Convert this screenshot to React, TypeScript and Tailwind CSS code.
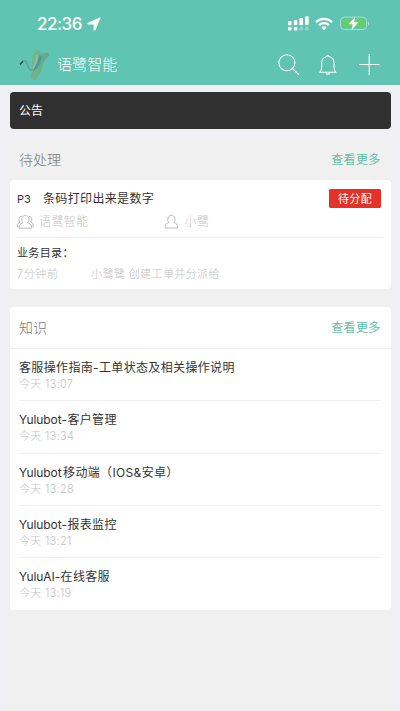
import type { ReactNode } from "react";

type Article = {
  name?: string;
  title: string;
  time: string;
};

const articles: Article[] = [
  { title: "客服操作指南-工单状态及相关操作说明", time: "今天 13:07" },
  { name: "Yulubot", title: "-客户管理", time: "今天 13:34" },
  { name: "Yulubot", title: "移动端（IOS&安卓）", time: "今天 13:28" },
  { name: "Yulubot", title: "-报表监控", time: "今天 13:21" },
  { name: "YuluAI", title: "-在线客服", time: "今天 13:19" },
];

function StatusBar() {
  return (
    <div className="flex h-[47px] items-center justify-between pl-[37px] pr-[30px]">
      <div className="flex items-center gap-[5px]">
        <span className="text-[17px] leading-5 font-medium tracking-[-0.5px]">
          22:36
        </span>
        <svg width="14" height="14" viewBox="0 0 14 14" fill="currentColor">
          <path d="M13.6 1 8.5 12.9c-.4.9-1.9.8-1.9-.4V7.6H1.5C.1 7.6-.1 6.3 1 5.8L12.7.4c.6-.3 1.1 0 .9.6Z" />
        </svg>
      </div>
      <div className="flex items-center">
        <svg width="21" height="15" viewBox="0 0 21 15" fill="currentColor">
          <rect x="0" y="5" width="3.6" height="4.2" rx="1" />
          <rect x="5.8" y="4" width="3.6" height="5.2" rx="1" />
          <rect x="11.4" y="2" width="3.6" height="7.2" rx="1" />
          <rect x="17.1" y=".3" width="3.6" height="8.9" rx="1" />
          <rect x="0" y="11" width="3.6" height="3.5" rx="1" />
          <rect x="5.8" y="11" width="3.6" height="3.5" rx="1" />
          <rect x="11.4" y="11" width="3.6" height="3.5" rx="1" opacity=".3" />
          <rect x="17.1" y="11" width="3.6" height="3.5" rx="1" opacity=".3" />
        </svg>
        <svg
          className="ml-1.5"
          width="18"
          height="14"
          viewBox="0 0 18 14"
          fill="none"
          stroke="currentColor"
          strokeWidth="2.3"
        >
          <path d="M1 5.1a11.3 11.3 0 0 1 16 0M3.9 8.3a7.3 7.3 0 0 1 10.2 0" />
          <path
            d="M6.3 10.6a3.8 3.8 0 0 1 5.4 0L9 13.3Z"
            fill="currentColor"
            stroke="none"
          />
        </svg>
        <svg className="ml-[7px]" width="30" height="15" viewBox="0 0 30 15">
          <rect
            x=".6"
            y="1.1"
            width="26"
            height="12.4"
            rx="3.8"
            fill="none"
            stroke="#a5e0d4"
          />
          <rect x="2.2" y="2.7" width="22.8" height="9.2" rx="2.4" fill="#65cd6a" />
          <path d="M28 5.3c1.6.5 1.6 3.5 0 4Z" fill="#a5e0d4" />
          <path
            d="m15.3.8-6.8 7.5h4.2l-1.1 5.6 6.8-7.6h-4.2Z"
            fill="#fff"
          />
        </svg>
      </div>
    </div>
  );
}

function Logo() {
  return (
    <svg width="32" height="34" viewBox="0 0 32 34" fill="none">
      <path d="M1 16.5 4.2 13" stroke="#234244" strokeWidth="1.2" />
      <path
        d="M4.5 13c2.4-.6 3.2 1 3.8 3.4.8 3.2 2.4 5 4.8 6.4"
        stroke="#5a9f98"
        strokeWidth="1.6"
      />
      <path
        d="m13.3 8 4.6-6.8 4 3.6 7.6-.3.8 2.6-5.2 6.4-3.5 10.6-5 8.2-4.5-1.8.6-6.3Z"
        fill="#68b494"
      />
      <path d="m13.5 8 4.4-6.8 3.8 4.3-3 13.5-5 4.2Z" fill="#74b78f" />
      <path d="m22.2 7.5 6.7-2.7 1 2.4-5.3 6.3-4.2 5Z" fill="#65a98e" />
      <path d="m20.8 6.3 1.7 3.4-3.3 9.5-5.7 4.4 4.2-8Z" fill="#50958f" />
      <path d="m13 24 7-3.5-.8 5-3.5 6.7-3.6-1.7Z" fill="#70b289" />
      <path
        d="M18 7c.5 5.2-1 9.2-4.2 13.3"
        stroke="#8bc4ac"
        strokeWidth="1.2"
      />
    </svg>
  );
}

function AppHeader() {
  return (
    <header className="h-[85px] bg-[#5fc4b1] text-white">
      <StatusBar />
      <div className="flex h-[35px] items-center pl-[19px] pr-5">
        <Logo />
        <h1 className="ml-1.5 text-[15px] leading-5 font-light tracking-[0.1px]">
          语鹭智能
        </h1>
        <svg
          className="ml-auto"
          width="102"
          height="24"
          viewBox="0 0 102 24"
          fill="none"
          stroke="currentColor"
          strokeWidth="1.1"
        >
          <circle cx="8.9" cy="9.7" r="8" />
          <path d="m14.5 15.5 6.5 6.3" />
          <path d="M42 19.2c1.2-1.6 1.6-2.6 1.6-4.4V10c0-3.5 2-5.8 5.2-6.5.2-1.6 1.9-1.6 2.1 0 3.2.7 5.2 3 5.2 6.5v4.8c0 1.8.4 2.8 1.6 4.4Z" />
          <path d="M48.1 19.6c0 2.3 3.5 2.3 3.5 0" />
          <path d="M81 11.5h20.5M91.2 1v21" />
        </svg>
      </div>
    </header>
  );
}

function SectionHeader({ title }: { title: string }) {
  return (
    <div className="flex h-[41px] items-center justify-between pl-[9.5px] pr-2.5">
      <h2 className="text-sm leading-5 font-light text-[#777]">{title}</h2>
      <button className="pt-px text-xs leading-5 tracking-[0.3px] text-[#64bda9]">
        查看更多
      </button>
    </div>
  );
}

function Person({ name, children }: { name: string; children: ReactNode }) {
  return (
    <div className="flex items-center text-[#c4c4c4]">
      <svg
        className="mr-1"
        width="18"
        height="16"
        viewBox="0 0 18 16"
        fill="none"
        stroke="#bbb"
        strokeWidth="1"
      >
        {children}
      </svg>
      <span className="text-xs leading-4 font-light tracking-[0.4px]">{name}</span>
    </div>
  );
}

function TicketCard() {
  return (
    <article className="h-[109px] rounded bg-white px-[7.5px] pt-[9px]">
      <div className="flex h-[19px] items-center justify-between pr-0.5">
        <h3 className="flex text-xs leading-4 tracking-[0.35px] text-[#333]">
          <span className="w-[26px] text-[11px] tracking-[-0.1px]">P3</span>
          条码打印出来是数字
        </h3>
        <span className="flex h-[19px] w-[52px] items-center justify-center rounded-[1.5px] bg-[#e63226] text-[11px] leading-4 tracking-[0.4px] text-white">
          待分配
        </span>
      </div>
      <div className="mt-1 grid h-[26px] grid-cols-[145.5px_1fr] border-b border-[#f0f0f0] pb-1.5">
        <Person name="语鹭智能">
          <path d="M6 8.8C3.8 6.4 4.6 1.5 8.4 1.5s4.6 4.9 2.4 7.3c3 .9 3.9 2.6 4 5.4H2c.1-2.8 1-4.5 4-5.4Z" />
          <path d="M4.8 2.2C1.9 2.4 1.3 5.8 3 8 1.1 8.9.6 10.3.5 12.8h1M12 2.2c2.9.2 3.5 3.6 1.8 5.8 1.9.9 2.4 2.3 2.5 4.8h-1" />
        </Person>
        <Person name="小鹭">
          <path d="M6 8.6C3.8 6.2 4.6 1.2 8.4 1.2s4.6 5 2.4 7.4c2.7.6 4 2 4 5.4H2c0-3.4 1.3-4.8 4-5.4Z" />
        </Person>
      </div>
      <p className="mt-[7px] text-[11px] leading-4 tracking-[0.35px] text-[#333]">
        业务目录：
      </p>
      <div className="mt-[5px] flex text-[11px] leading-4 font-light tracking-[0.4px] text-[#c2c2c2]">
        <time className="w-[74px] tracking-[0.6px]">7分钟前</time>
        <span>小鹭鹭 创建工单并分派给</span>
      </div>
    </article>
  );
}

function ArticleRow({ name, title, time }: Article) {
  return (
    <li className="ml-[9.5px] mr-2.5 h-[52.3px] border-b border-[#f0f0f0] pt-2.5 last:border-0">
      <h3 className="text-xs leading-[18px] tracking-[0.35px] text-[#333]">
        {name && (
          <span
            className={
              title.startsWith("-")
                ? "tracking-[-0.1px]"
                : "mr-[1.5px] tracking-[-0.1px]"
            }
          >
            {name}
          </span>
        )}
        {title}
      </h3>
      <time className="block text-[11px] leading-[14px] font-light tracking-[0.3px] text-[#c2c2c2]">
        {time}
      </time>
    </li>
  );
}

export default function App() {
  return (
    <div className="h-[711px] overflow-hidden bg-[#efeff4] font-['Inter','Noto_Sans_CJK_SC',sans-serif]">
      <AppHeader />
      <main className="mx-[9.5px] pt-[7px]">
        <div className="flex h-[37px] items-center rounded bg-[#303030] pt-px pl-[9.5px] text-xs text-white">
          公告
        </div>
        <div className="mt-2.5 h-[572px] bg-[#f0f0f0]">
          <SectionHeader title="待处理" />
          <TicketCard />
          <section className="mt-[18px] rounded bg-white">
            <SectionHeader title="知识" />
            <ul className="border-t border-[#eee]">
              {articles.map((article) => (
                <ArticleRow key={article.time} {...article} />
              ))}
            </ul>
          </section>
        </div>
      </main>
    </div>
  );
}
